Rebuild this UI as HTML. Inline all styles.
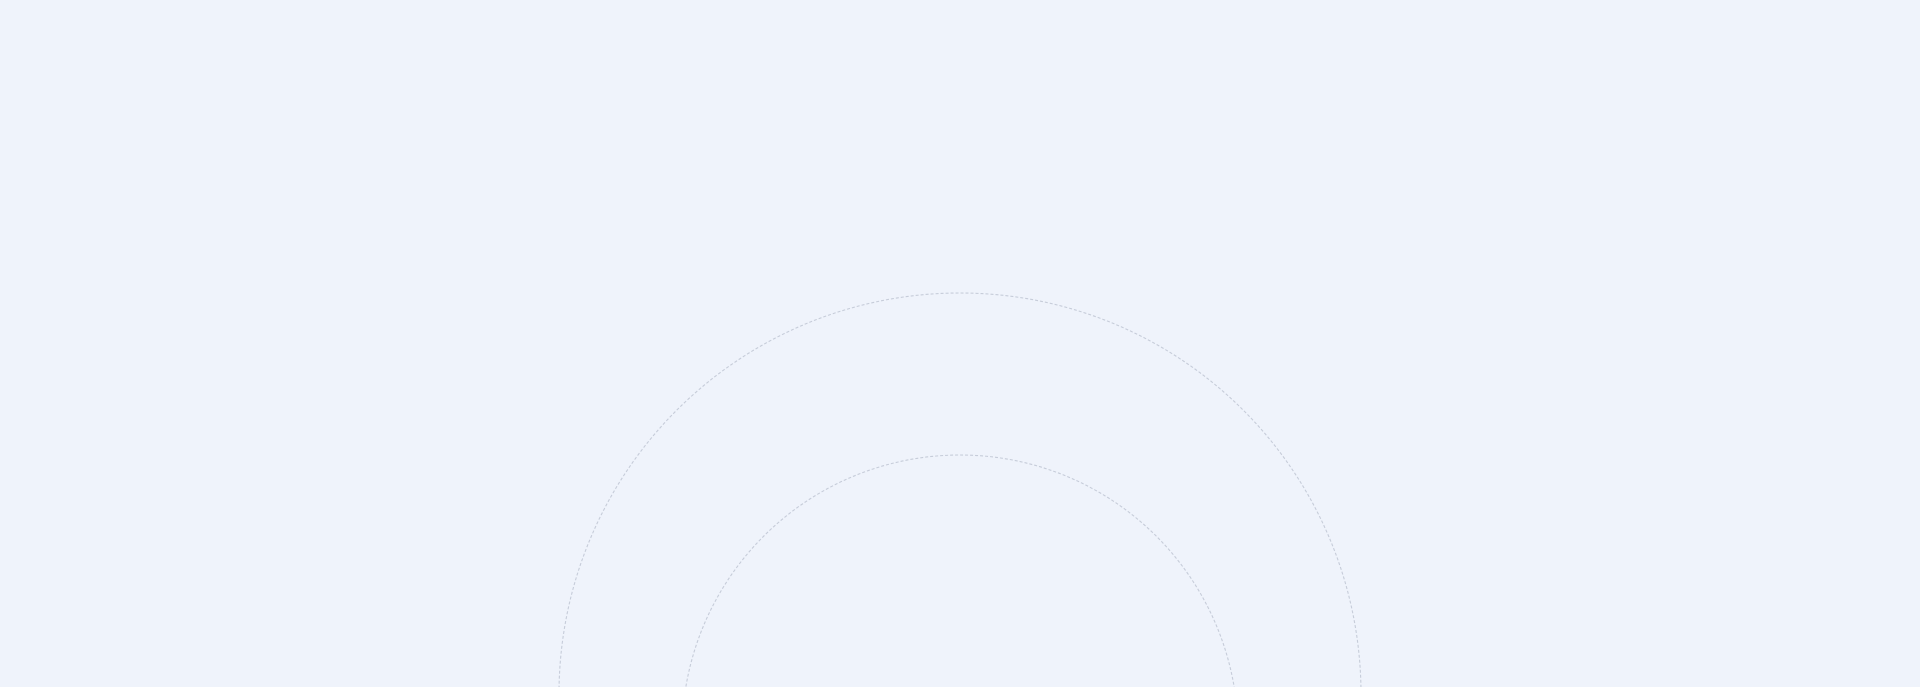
<!DOCTYPE html>
<html><head><style>html,body{margin:0;padding:0;background:#eff3fb;width:1920px;height:687px;overflow:hidden}</style></head>
<body>
<svg width="1920" height="687" style="position:absolute;left:0;top:0">
<circle cx="960" cy="694" r="401" fill="none" stroke="#c6ccd9" stroke-width="1.1" stroke-dasharray="3 2"/>
<circle cx="960" cy="733" r="278" fill="none" stroke="#c6ccd9" stroke-width="1.1" stroke-dasharray="3 2"/>
</svg>
</body></html>
